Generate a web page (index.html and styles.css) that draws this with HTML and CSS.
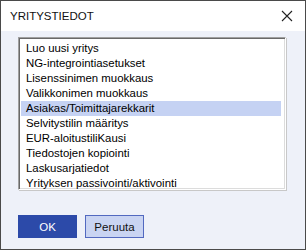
FILE: index.html
```html
<!DOCTYPE html>
<html lang="fi">
  <head>
    <meta charset="UTF-8" />
    <title>Yritystiedot</title>
    <link rel="stylesheet" href="styles.css">
  </head>
  <body>
    <div class="dialog">
      <div class="titlebar">
        <span class="title">YRITYSTIEDOT</span>
        <svg class="close" width="12" height="12" viewBox="0 0 12 12">
          <path d="M1 1 L11 11 M11 1 L1 11" stroke="#222" stroke-width="1.1" fill="none" />
        </svg>
      </div>
      <div class="content">
        <ul class="listbox">
          <li>Luo uusi yritys</li>
          <li>NG-integrointiasetukset</li>
          <li>Lisenssinimen muokkaus</li>
          <li>Valikkonimen muokkaus</li>
          <li class="selected">Asiakas/Toimittajarekkarit</li>
          <li>Selvitystilin määritys</li>
          <li>EUR-aloitustiliKausi</li>
          <li>Tiedostojen kopiointi</li>
          <li>Laskusarjatiedot</li>
          <li>Yrityksen passivointi/aktivointi</li>
        </ul>
        <div class="buttons">
          <button class="btn btn-ok">OK</button>
          <button class="btn btn-cancel">Peruuta</button>
        </div>
      </div>
    </div>
  </body>
</html>
```

FILE: styles.css
```css
body {
  margin: 0;
  font-family: "Liberation Sans", Arial, sans-serif;
  font-size: 12px;
  color: #000;
  background: #fff;
}

.dialog {
  width: 304px;
  height: 248px;
  border: 1px solid #4a4a4a;
  display: flex;
  flex-direction: column;
  background: #eef1f9;
}

.titlebar {
  height: 30px;
  background: #fff;
  display: flex;
  align-items: center;
  justify-content: space-between;
  padding: 0 12px 0 9px;
}

.title {
  font-size: 11.5px;
  color: #111;
  padding-bottom: 1px;
}

.close {
  display: block;
}

.content {
  flex: 1;
  padding: 6px 17px 0 17px;
}

.listbox {
  list-style: none;
  margin: 0;
  width: 268px;
  height: 153px;
  box-sizing: border-box;
  padding: 3px 4px 0 2px;
  background: #fff;
  border-top: 1px solid #a0a0a0;
  border-left: 1px solid #a0a0a0;
  border-right: 1px solid #fff;
  border-bottom: 1px solid #fff;
  box-shadow: inset 1px 1px 0 #696969, inset -1px -1px 0 #dcdcdc, 1px 1px 0 #c8c8c8;
  font-size: 11.4px;
}

.listbox li {
  height: 15px;
  line-height: 15px;
  padding-left: 5px;
  white-space: nowrap;
}

.listbox .selected {
  background: #c5d2f3;
}

.buttons {
  display: flex;
  gap: 8px;
  margin-top: 25px;
}

.btn {
  width: 59px;
  height: 23px;
  font-family: "Liberation Sans", Arial, sans-serif;
  font-size: 11.5px;
  padding: 0;
  box-sizing: border-box;
}

.btn-ok {
  background: #2c4aa9;
  border: 1px solid #2c4aa9;
  color: #fff;
}

.btn-cancel {
  background: #c9d4f2;
  border: 1px solid #5269c0;
  color: #111;
}
```
